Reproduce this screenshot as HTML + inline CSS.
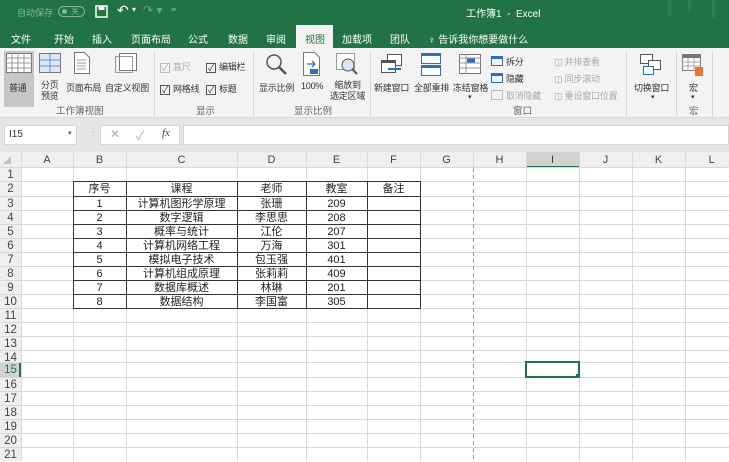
<!DOCTYPE html>
<html><head><meta charset="utf-8"><style>
*{margin:0;padding:0;box-sizing:border-box}
body{width:729px;height:461px;overflow:hidden;position:relative;background:#fff;font-family:"Liberation Sans","Noto Sans CJK SC",sans-serif;font-size:11px;color:#333}
.a{position:absolute}
.t{position:absolute;white-space:nowrap}
.tab{position:absolute;top:31px;color:#fff;font-size:10px}
.gl{position:absolute;top:103px;font-size:9.5px;color:#666}
.sep{position:absolute;top:52px;width:1px;height:64px;background:#d4d4d4}
.rb{position:absolute;font-size:9px;color:#333;white-space:nowrap;letter-spacing:-0.2px}
.cb{display:inline-block;width:10px;height:10px;border:1px solid #555;vertical-align:-1px;margin-right:3px;font-size:9px;line-height:8px;text-align:center}
.ch{position:absolute;top:153px;height:15px;font-size:11px;color:#444;text-align:center;line-height:15px}
.rh{position:absolute;left:0;width:21px;font-size:11.5px;color:#444;text-align:center;line-height:14px}
.cell{position:absolute;text-align:center;font-size:11px;color:#222;line-height:14px}
</style></head><body>
<div class="a" style="left:0;top:0;width:729px;height:48px;background:#217346"></div>
<div class="t" style="left:17px;top:6px;color:#7fb596;font-size:9px">自动保存</div>
<div class="a" style="left:58px;top:6px;width:27px;height:11px;border:1px solid #7fb596;border-radius:6px"></div>
<div class="a" style="left:62px;top:9px;width:5px;height:5px;border-radius:3px;background:#7fb596"></div>
<div class="t" style="left:71px;top:6px;color:#7fb596;font-size:8px">关</div>
<svg class="a" style="left:95px;top:5px" width="14" height="13"><rect x="1" y="1" width="11" height="11" fill="none" stroke="#fff" stroke-width="1.5"/><rect x="3.5" y="1" width="6" height="4" fill="#fff"/></svg>
<div class="t" style="left:117px;top:2px;color:#fff;font-size:14px">↶</div>
<div class="t" style="left:132px;top:5px;color:#fff;font-size:8px">▾</div>
<div class="t" style="left:143px;top:3px;color:#6ba685;font-size:12px">↷ ▾</div>
<div class="t" style="left:171px;top:3px;color:#fff;font-size:10px">₌</div>
<div class="t" style="left:466px;top:5px;color:#fff;font-size:10px">工作簿1 &nbsp;- &nbsp;Excel</div>
<div class="a" style="left:668px;top:0;width:3px;height:16px;background:#2e7c51"></div>
<div class="a" style="left:688px;top:0;width:3px;height:12px;background:#2e7c51"></div>
<div class="a" style="left:712px;top:0;width:3px;height:18px;background:#2e7c51"></div>
<div class="tab" style="left:11px">文件</div>
<div class="tab" style="left:54px">开始</div>
<div class="tab" style="left:92px">插入</div>
<div class="tab" style="left:131px">页面布局</div>
<div class="tab" style="left:188px">公式</div>
<div class="tab" style="left:228px">数据</div>
<div class="tab" style="left:266px">审阅</div>
<div class="a" style="left:296px;top:25px;width:37px;height:23px;background:#f3f3f3"></div>
<div class="tab" style="left:305px;color:#217346">视图</div>
<div class="tab" style="left:342px">加载项</div>
<div class="tab" style="left:390px">团队</div>
<div class="tab" style="left:428px">♀ 告诉我你想要做什么</div>
<div class="a" style="left:0;top:48px;width:729px;height:70px;background:#f3f3f3;border-bottom:1px solid #d8d8d8"></div>
<div class="a" style="left:4px;top:51px;width:30px;height:56px;background:#c6c6c6"></div>
<svg class="a" style="left:6px;top:53px" width="26" height="20"><rect x="0.5" y="0.5" width="25" height="19" fill="#fff" stroke="#777"/><path d="M0 5h26M0 10h26M0 15h26M6 0v20M12 0v20M18 0v20" stroke="#999"/></svg>
<div class="rb" style="left:9px;top:81px">普通</div>
<svg class="a" style="left:39px;top:53px" width="22" height="20"><rect x="0.5" y="0.5" width="21" height="19" fill="#dbe7f5" stroke="#777"/><path d="M11 0v20M0 7h22M0 13h22" stroke="#6b8fc9"/></svg>
<div class="rb" style="left:41px;top:80px;line-height:11px">分页<br>预览</div>
<svg class="a" style="left:74px;top:52px" width="16" height="22"><path d="M0.5 0.5h10l5 5v16h-15z" fill="#fff" stroke="#777"/><path d="M3 8h9M3 11h9M3 14h9M3 17h9" stroke="#999"/></svg>
<div class="rb" style="left:66px;top:81px">页面布局</div>
<svg class="a" style="left:115px;top:53px" width="22" height="20"><rect x="4.5" y="0.5" width="17" height="17" fill="#fff" stroke="#777"/><rect x="0.5" y="3.5" width="17" height="16" fill="none" stroke="#999"/></svg>
<div class="rb" style="left:105px;top:81px">自定义视图</div>
<div class="gl" style="left:56px">工作簿视图</div>
<div class="sep" style="left:154px"></div>
<div class="rb" style="left:160px;top:60px;color:#aaa"><span class="cb" style="border-color:#bbb">✓</span>直尺</div>
<div class="rb" style="left:206px;top:60px"><span class="cb">✓</span>编辑栏</div>
<div class="rb" style="left:160px;top:82px"><span class="cb">✓</span>网格线</div>
<div class="rb" style="left:206px;top:82px"><span class="cb">✓</span>标题</div>
<div class="gl" style="left:196px">显示</div>
<div class="sep" style="left:253px"></div>
<svg class="a" style="left:265px;top:53px" width="24" height="24"><circle cx="9" cy="9" r="7" fill="none" stroke="#555" stroke-width="1.5"/><path d="M14 14l7 7" stroke="#555" stroke-width="2.5"/></svg>
<div class="rb" style="left:259px;top:81px">显示比例</div>
<svg class="a" style="left:303px;top:52px" width="18" height="24"><path d="M0.5 0.5h11l5 5v18h-16z" fill="#fff" stroke="#777"/><path d="M4 12h8M9 9l3 3-3 3" stroke="#2b6fc1" fill="none" stroke-width="1.3"/><rect x="7" y="17" width="8" height="5" fill="#2b6fc1"/></svg>
<div class="rb" style="left:301px;top:81px">100%</div>
<svg class="a" style="left:336px;top:53px" width="22" height="22"><rect x="0.5" y="0.5" width="18" height="16" fill="#fff" stroke="#999"/><circle cx="12" cy="12" r="6" fill="#dbe7f5" stroke="#555"/><path d="M16 16l5 5" stroke="#555" stroke-width="2"/></svg>
<div class="rb" style="left:330px;top:80px;line-height:11px;text-align:center">缩放到<br>选定区域</div>
<div class="gl" style="left:294px">显示比例</div>
<div class="sep" style="left:370px"></div>
<svg class="a" style="left:381px;top:54px" width="22" height="22"><rect x="6.5" y="0.5" width="14" height="11" fill="#fff" stroke="#555"/><rect x="0.5" y="6.5" width="14" height="12" fill="#fff" stroke="#555"/><rect x="1" y="7" width="13" height="2" fill="#555"/><rect x="7" y="14" width="13" height="2" fill="#2b6fc1"/></svg>
<div class="rb" style="left:374px;top:81px">新建窗口</div>
<svg class="a" style="left:421px;top:53px" width="20" height="24"><rect x="0.5" y="0.5" width="19" height="10" fill="#fff" stroke="#2b6fc1"/><rect x="0.5" y="12.5" width="19" height="10" fill="#fff" stroke="#2b6fc1"/><rect x="1" y="1" width="18" height="2" fill="#2b6fc1"/><rect x="1" y="13" width="18" height="2" fill="#2b6fc1"/></svg>
<div class="rb" style="left:414px;top:81px">全部重排</div>
<svg class="a" style="left:459px;top:54px" width="22" height="20"><rect x="0.5" y="0.5" width="21" height="19" fill="#fff" stroke="#777"/><rect x="8" y="4" width="8" height="5" fill="#2b6fc1"/><path d="M0 4h22M7 0v20M0 9h22M0 14h22" stroke="#999"/></svg>
<div class="rb" style="left:453px;top:81px">冻结窗格</div>
<div class="rb" style="left:468px;top:93px;font-size:7px">▾</div>
<div class="rb" style="left:491px;top:55px"><span class="cb" style="width:12px;border-color:#2b6fc1;border-top:3px solid #2b6fc1"></span>拆分</div>
<div class="rb" style="left:491px;top:72px"><span class="cb" style="width:12px;border-color:#2b6fc1;border-top:3px solid #2b6fc1"></span>隐藏</div>
<div class="rb" style="left:491px;top:89px;color:#aaa"><span class="cb" style="width:12px;border-color:#bbb"></span>取消隐藏</div>
<div class="rb" style="left:554px;top:55px;color:#aaa">◫ 并排查看</div>
<div class="rb" style="left:554px;top:72px;color:#aaa">◫ 同步滚动</div>
<div class="rb" style="left:554px;top:89px;color:#aaa">◫ 重设窗口位置</div>
<div class="gl" style="left:513px">窗口</div>
<div class="sep" style="left:626px"></div>
<svg class="a" style="left:640px;top:54px" width="22" height="22"><rect x="0.5" y="0.5" width="12" height="9" fill="#fff" stroke="#555"/><rect x="8.5" y="6.5" width="12" height="9" fill="#fff" stroke="#555"/><rect x="3.5" y="12.5" width="10" height="8" fill="#fff" stroke="#2b6fc1"/></svg>
<div class="rb" style="left:634px;top:81px">切换窗口</div>
<div class="rb" style="left:651px;top:93px;font-size:7px">▾</div>
<div class="sep" style="left:676px"></div>
<svg class="a" style="left:682px;top:54px" width="22" height="24"><rect x="0.5" y="0.5" width="18" height="16" fill="#fff" stroke="#777"/><rect x="1" y="1" width="17" height="3" fill="#777"/><path d="M0 8h19M0 12h19M6 4v13M12 4v13" stroke="#aaa"/><rect x="13" y="13" width="8" height="9" fill="#e8762b"/></svg>
<div class="rb" style="left:689px;top:81px">宏</div>
<div class="rb" style="left:691px;top:93px;font-size:7px">▾</div>
<div class="gl" style="left:689px">宏</div>
<div class="sep" style="left:712px"></div>
<div class="a" style="left:0;top:118px;width:729px;height:35px;background:#e6e6e6"></div>
<div class="a" style="left:4px;top:125px;width:73px;height:20px;background:#fff;border:1px solid #d6d6d6"></div>
<div class="t" style="left:9px;top:129px;font-size:10px">I15</div>
<div class="t" style="left:68px;top:129px;font-size:7px;color:#555">▾</div>
<div class="t" style="left:88px;top:127px;color:#bbb;font-size:10px">⋮</div>
<div class="a" style="left:100px;top:125px;width:80px;height:20px;background:#fff;border:1px solid #d6d6d6"></div>
<div class="t" style="left:110px;top:127px;color:#aaa;font-size:12px">✕</div>
<div class="t" style="left:136px;top:127px;color:#aaa;font-size:12px">✓</div>
<div class="t" style="left:162px;top:127px;color:#444;font-size:11px;font-style:italic;font-family:'Liberation Serif',serif">fx</div>
<div class="a" style="left:183px;top:125px;width:546px;height:20px;background:#fff;border:1px solid #d6d6d6"></div>
<svg class="a" style="left:0;top:152px" width="729" height="309">
<rect x="0" y="0" width="729" height="16" fill="#efefef"/>
<rect x="0" y="0" width="21" height="309" fill="#efefef"/>
<rect x="526" y="0" width="53" height="16" fill="#d2d2d2"/>
<rect x="526" y="14" width="53" height="2" fill="#217346"/>
<rect x="0" y="210" width="21" height="15" fill="#d2d2d2"/>
<rect x="19" y="210" width="2" height="15" fill="#217346"/>
<path d="M3 12l8 -8v8z" fill="#c4c4c4"/>
<g stroke="#d9d9d9" stroke-width="1">
<path d="M21.5 0v309M73.5 0v309M126.5 0v309M237.5 0v309M306.5 0v309M367.5 0v309M420.5 0v309M526.5 0v309M579.5 0v309M632.5 0v309M685.5 0v309"/>
<path d="M0 15.5h729M0 29.5h729M0 44.5h729M0 58.5h729M0 72.5h729M0 86.5h729M0 100.5h729M0 114.5h729M0 128.5h729M0 142.5h729M0 156.5h729M0 170.5h729M0 184.5h729M0 198.5h729M0 210.5h729M0 225.5h729M0 239.5h729M0 253.5h729M0 267.5h729M0 281.5h729M0 295.5h729"/>
</g>
<path d="M473.5 16v293" stroke="#999" stroke-dasharray="4,3"/>
<path d="M473.5 0v16" stroke="#d9d9d9"/>
<g stroke="#333" stroke-width="1" fill="none">
<rect x="73.5" y="29.5" width="347" height="127"/>
<path d="M126.5 29.5v127M237.5 29.5v127M306.5 29.5v127M367.5 29.5v127"/>
<path d="M73.5 44.5h347M73.5 58.5h347M73.5 72.5h347M73.5 86.5h347M73.5 100.5h347M73.5 114.5h347M73.5 128.5h347M73.5 142.5h347"/>
</g>
<rect x="526" y="210" width="53" height="15" fill="none" stroke="#217346" stroke-width="2"/>
<rect x="576" y="222" width="4" height="4" fill="#217346"/>
</svg>
<div class="ch" style="left:21px;width:52px">A</div>
<div class="ch" style="left:73px;width:53px">B</div>
<div class="ch" style="left:126px;width:111px">C</div>
<div class="ch" style="left:237px;width:69px">D</div>
<div class="ch" style="left:306px;width:61px">E</div>
<div class="ch" style="left:367px;width:53px">F</div>
<div class="ch" style="left:420px;width:53px">G</div>
<div class="ch" style="left:473px;width:53px">H</div>
<div class="ch" style="left:526px;width:53px">I</div>
<div class="ch" style="left:579px;width:53px">J</div>
<div class="ch" style="left:632px;width:53px">K</div>
<div class="ch" style="left:685px;width:53px">L</div>
<div class="rh" style="top:168px">1</div>
<div class="rh" style="top:182px">2</div>
<div class="rh" style="top:197px">3</div>
<div class="rh" style="top:211px">4</div>
<div class="rh" style="top:225px">5</div>
<div class="rh" style="top:239px">6</div>
<div class="rh" style="top:253px">7</div>
<div class="rh" style="top:267px">8</div>
<div class="rh" style="top:281px">9</div>
<div class="rh" style="top:295px">10</div>
<div class="rh" style="top:309px">11</div>
<div class="rh" style="top:323px">12</div>
<div class="rh" style="top:337px">13</div>
<div class="rh" style="top:351px">14</div>
<div class="rh" style="top:363px;color:#217346">15</div>
<div class="rh" style="top:378px">16</div>
<div class="rh" style="top:392px">17</div>
<div class="rh" style="top:406px">18</div>
<div class="rh" style="top:420px">19</div>
<div class="rh" style="top:434px">20</div>
<div class="rh" style="top:448px">21</div>
<div class="cell" style="left:73px;top:182px;width:53px">序号</div>
<div class="cell" style="left:126px;top:182px;width:111px">课程</div>
<div class="cell" style="left:237px;top:182px;width:69px">老师</div>
<div class="cell" style="left:306px;top:182px;width:61px">教室</div>
<div class="cell" style="left:367px;top:182px;width:53px">备注</div>
<div class="cell" style="left:73px;top:197px;width:53px">1</div><div class="cell" style="left:126px;top:197px;width:111px">计算机图形学原理</div><div class="cell" style="left:237px;top:197px;width:69px">张珊</div><div class="cell" style="left:306px;top:197px;width:61px">209</div>
<div class="cell" style="left:73px;top:211px;width:53px">2</div><div class="cell" style="left:126px;top:211px;width:111px">数字逻辑</div><div class="cell" style="left:237px;top:211px;width:69px">李思思</div><div class="cell" style="left:306px;top:211px;width:61px">208</div>
<div class="cell" style="left:73px;top:225px;width:53px">3</div><div class="cell" style="left:126px;top:225px;width:111px">概率与统计</div><div class="cell" style="left:237px;top:225px;width:69px">江伦</div><div class="cell" style="left:306px;top:225px;width:61px">207</div>
<div class="cell" style="left:73px;top:239px;width:53px">4</div><div class="cell" style="left:126px;top:239px;width:111px">计算机网络工程</div><div class="cell" style="left:237px;top:239px;width:69px">万海</div><div class="cell" style="left:306px;top:239px;width:61px">301</div>
<div class="cell" style="left:73px;top:253px;width:53px">5</div><div class="cell" style="left:126px;top:253px;width:111px">模拟电子技术</div><div class="cell" style="left:237px;top:253px;width:69px">包玉强</div><div class="cell" style="left:306px;top:253px;width:61px">401</div>
<div class="cell" style="left:73px;top:267px;width:53px">6</div><div class="cell" style="left:126px;top:267px;width:111px">计算机组成原理</div><div class="cell" style="left:237px;top:267px;width:69px">张莉莉</div><div class="cell" style="left:306px;top:267px;width:61px">409</div>
<div class="cell" style="left:73px;top:281px;width:53px">7</div><div class="cell" style="left:126px;top:281px;width:111px">数据库概述</div><div class="cell" style="left:237px;top:281px;width:69px">林琳</div><div class="cell" style="left:306px;top:281px;width:61px">201</div>
<div class="cell" style="left:73px;top:295px;width:53px">8</div><div class="cell" style="left:126px;top:295px;width:111px">数据结构</div><div class="cell" style="left:237px;top:295px;width:69px">李国富</div><div class="cell" style="left:306px;top:295px;width:61px">305</div>
</body></html>
